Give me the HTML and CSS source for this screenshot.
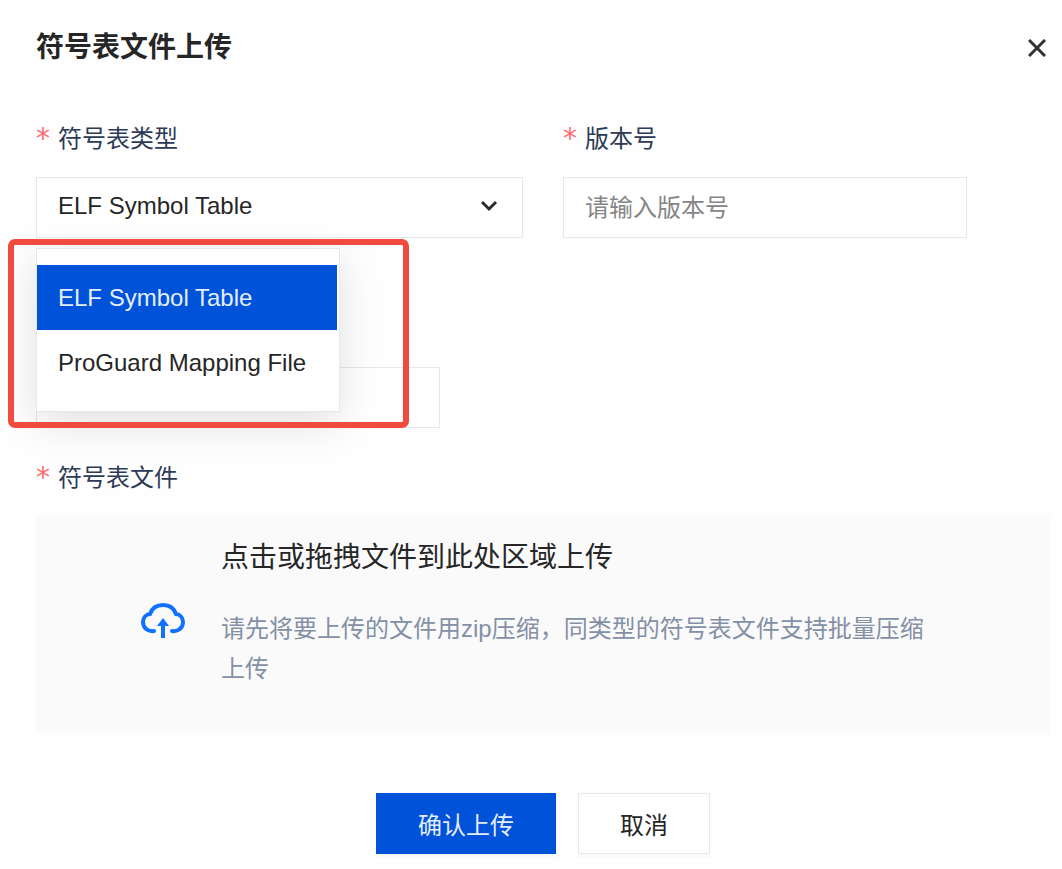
FILE: index.html
```html
<!DOCTYPE html>
<html lang="zh-CN">
<head>
<meta charset="utf-8">
<meta name="viewport" content="width=device-width, initial-scale=1">
<title>符号表文件上传</title>
<link rel="stylesheet" href="styles.css">
</head>
<body>
<main class="dialog">
  <header class="dialog-header">
    <h1 class="dialog-title">符号表文件上传</h1>
    <button class="close" type="button" aria-label="关闭">
      <svg class="close-icon" viewBox="0 0 18 18"><path d="M1 1L17 17M17 1L1 17"/></svg>
    </button>
  </header>
  <form class="form">
    <div class="row">
      <div class="field">
        <label class="label" for="type"><span class="required">*</span>符号表类型</label>
        <div class="select-wrap">
          <select class="control select" id="type">
            <option>ELF Symbol Table</option>
            <option>ProGuard Mapping File</option>
          </select>
          <svg class="chevron" viewBox="0 0 18 12"><path d="M2 2L9 9L16 2"/></svg>
          <div class="menu">
            <button class="menu-item selected" type="button">ELF Symbol Table</button>
            <button class="menu-item" type="button">ProGuard Mapping File</button>
          </div>
          <div class="highlight"></div>
        </div>
      </div>
      <div class="field">
        <label class="label" for="version"><span class="required">*</span>版本号</label>
        <input class="control short" id="version" type="text" placeholder="请输入版本号">
      </div>
    </div>
    <div class="field covered">
      <input class="control short" type="text">
    </div>
    <div class="field file-field">
      <label class="label" for="file"><span class="required">*</span>符号表文件</label>
      <label class="upload" for="file">
        <svg class="upload-icon" viewBox="0 0 44 36">
          <path class="cloud" d="M13 28C6 29 2 24 2 19C2 14.500 5 11.500 9 11C11 5 16 2 22 2C28 2 33 5 35 11C39 11.500 42 14.500 42 19C42 24 38 29 31 28"/>
          <path class="stem" d="M22 35V20"/>
          <path class="arrow" d="M22 15L28 23H16Z"/>
        </svg>
        <span class="upload-text">
          <span class="upload-title">点击或拖拽文件到此处区域上传</span>
          <span class="upload-hint">请先将要上传的文件用zip压缩，同类型的符号表文件支持批量压缩上传</span>
        </span>
        <input class="file-input" id="file" type="file">
      </label>
    </div>
    <footer class="actions">
      <button class="button primary" type="button">确认上传</button>
      <button class="button" type="button">取消</button>
    </footer>
  </form>
</main>
</body>
</html>
```
FILE: styles.css
```css
* {
  box-sizing: border-box;
}

body {
  margin: 0;
  background: #fefefe;
  color: #262626;
  font-family: "Liberation Sans", "Noto Sans CJK SC", sans-serif;
  font-size: 24px;
}

button,
input,
select {
  font: inherit;
  color: inherit;
}

.dialog {
  padding: 28px 12px 14px 36px;
}

.dialog-header {
  display: flex;
  align-items: center;
  justify-content: space-between;
  height: 40px;
}

.dialog-title {
  margin: 0;
  font-size: 28px;
  line-height: 40px;
  font-weight: 700;
}

.close {
  display: flex;
  padding: 4px;
  border: 0;
  background: none;
}

.close-icon {
  width: 18px;
  height: 18px;
  fill: none;
  stroke: #333;
  stroke-width: 3;
}

.form {
  margin-top: 55px;
}

.row {
  display: grid;
  grid-template-columns: 1fr 1fr;
  gap: 40px;
}

.field {
  display: flex;
  flex-direction: column;
  gap: 22px;
}

.label {
  display: flex;
  gap: 8px;
  height: 32px;
  line-height: 32px;
  color: #2c3a55;
}

.required {
  width: 14px;
  font-family: "DejaVu Sans", sans-serif;
  font-size: 28px;
  color: #ff6a70;
}

.control {
  width: 100%;
  height: 61px;
  padding: 0 21px;
  border: 1px solid #e4e7ed;
  border-radius: 0;
  background: #fff;
}

.control::placeholder {
  color: #858585;
  opacity: 1;
}

.short {
  max-width: 404px;
}

.select-wrap {
  position: relative;
}

.select {
  display: block;
  appearance: none;
  padding-bottom: 4px;
}

.chevron {
  position: absolute;
  top: 23px;
  right: 25px;
  width: 18px;
  height: 12px;
  fill: none;
  stroke: #2b2b2b;
  stroke-width: 3;
}

.menu {
  position: absolute;
  z-index: 1;
  top: 71px;
  left: 0;
  width: 304px;
  padding: 16px 2px 16px 0;
  border: 1px solid #e6e8ef;
  background: #fff;
  box-shadow: 0 12px 40px rgba(0, 0, 0, 0.12);
}

.menu-item {
  display: block;
  width: 100%;
  height: 65px;
  padding: 0 21px;
  border: 0;
  background: none;
  text-align: left;
  white-space: nowrap;
}

.selected {
  background: #0052d9;
  color: #e4eeff;
}

.highlight {
  position: absolute;
  z-index: 2;
  top: 62px;
  left: -28px;
  width: 401px;
  height: 189px;
  border: 6px solid #f14b40;
  border-radius: 7px;
  pointer-events: none;
}

.covered {
  margin-top: 129px;
}

.file-field {
  margin-top: 34px;
}

.upload {
  display: flex;
  gap: 36px;
  padding: 22px 108px 44px 105px;
  background: #fafafa;
}

.upload-icon {
  flex: none;
  width: 44px;
  height: 36px;
  margin-top: 65px;
}

.cloud,
.stem {
  fill: none;
  stroke: #1071ff;
  stroke-width: 4;
}

.cloud {
  stroke-linecap: round;
}

.arrow {
  fill: #1071ff;
}

.upload-text {
  display: flex;
  flex-direction: column;
  gap: 31px;
  line-height: 40px;
}

.upload-title {
  font-size: 28px;
}

.upload-hint {
  color: #8390a6;
}

.file-input {
  position: absolute;
  width: 1px;
  height: 1px;
  opacity: 0;
}

.actions {
  display: flex;
  justify-content: center;
  gap: 22px;
  margin-top: 60px;
}

.button {
  height: 61px;
  padding: 0 41px;
  border: 1px solid #e6e8ef;
  background: #fff;
  box-shadow: 0 4px 0 rgba(0, 0, 0, 0.015);
}

.primary {
  border-color: #0052d9;
  background: #0052d9;
  color: #e4eeff;
}
```
